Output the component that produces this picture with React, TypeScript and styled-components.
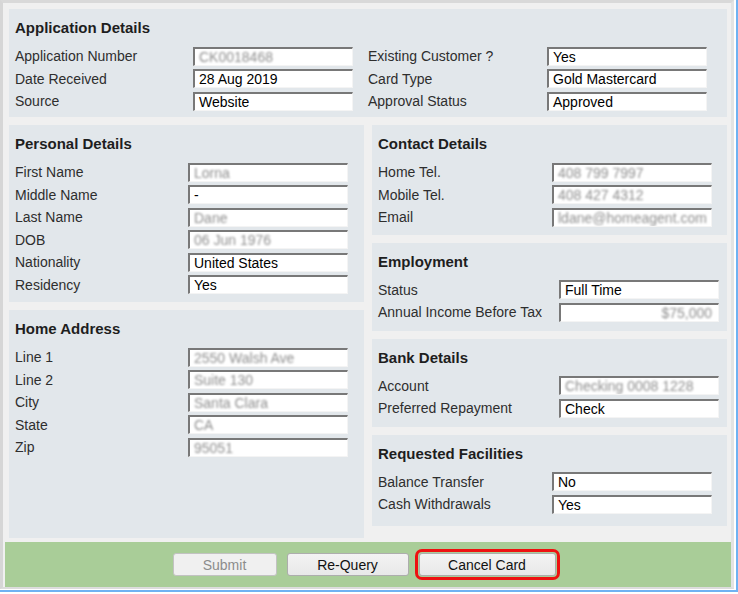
import React, { FC } from "react";
import styled, { createGlobalStyle } from "styled-components";

const GlobalStyle = createGlobalStyle`
  html, body {
    margin: 0;
    padding: 0;
    background: #ffffff;
    font-family: "Liberation Sans", Arial, sans-serif;
  }
`;

const Screen = styled.div`
  width: 738px;
  height: 594px;
  overflow: hidden;
  background: #ffffff;
`;

const BlueEdge = styled.div`
  width: 738px;
  box-sizing: border-box;
  border-right: 2px solid #6fb2f2;
  border-bottom: 2px solid #6fb2f2;
`;

const Frame = styled.div`
  width: 734px;
  box-sizing: border-box;
  background: #f0f0f0;
  border-left: 3px solid #d6d6d6;
  border-top: 3px solid #d9d9d9;
  border-right: 3px solid #e3e3e3;
  border-bottom: 2px solid #dcdcdc;
  padding-left: 2px;
  margin-bottom: 1px;
`;

const Main = styled.div`
  padding: 6px 4px 4px 4px;
  display: flex;
  flex-direction: column;
  gap: 8px;
`;

const Columns = styled.div`
  display: grid;
  grid-template-columns: 355px 355px;
  column-gap: 8px;
  align-items: start;
`;

const Stack = styled.div`
  display: flex;
  flex-direction: column;
  gap: 8px;
`;

const Panel = styled.section<{ $minHeight?: number; $padBottom?: number }>`
  background: #e2e7eb;
  padding: 10px 6px ${(p) => p.$padBottom ?? 6}px 6px;
  box-sizing: border-box;
  min-height: ${(p) => (p.$minHeight ? `${p.$minHeight}px` : "auto")};
`;

const Heading = styled.h2`
  margin: 0 0 8px 0;
  font-size: 15px;
  line-height: 18px;
  font-weight: bold;
  color: #1e1e1e;
`;

const Halves = styled.div`
  display: grid;
  grid-template-columns: 353px 1fr;
`;

const Row = styled.div<{ $labelWidth: number }>`
  display: grid;
  grid-template-columns: ${(p) => p.$labelWidth}px 160px;
  height: 22.5px;
  align-items: center;
`;

const Label = styled.span`
  font-size: 14px;
  color: #2e2e2e;
  white-space: nowrap;
`;

const Field = styled.div<{ $muted?: boolean; $right?: boolean }>`
  width: 160px;
  height: 19px;
  box-sizing: border-box;
  background: #ffffff;
  border-top: 2px solid #787878;
  border-left: 2px solid #787878;
  border-right: 1px solid #f4f4f4;
  border-bottom: 1px solid #f4f4f4;
  padding: 0 6px 0 4px;
  display: flex;
  align-items: center;
  justify-content: ${(p) => (p.$right ? "flex-end" : "flex-start")};
  font-size: 14px;
  line-height: 16px;
  white-space: nowrap;
  overflow: hidden;
  color: #000000;

  span {
    color: ${(p) => (p.$muted ? "#8f8f8f" : "inherit")};
    filter: ${(p) => (p.$muted ? "blur(1.3px)" : "none")};
  }
`;

const Footer = styled.div`
  height: 45px;
  background: #a9cd98;
  display: flex;
  align-items: center;
  justify-content: center;
  gap: 10px;
  padding-right: 8px;
`;

const Button = styled.button<{ $w: number; $flag?: boolean }>`
  width: ${(p) => p.$w}px;
  height: 23px;
  box-sizing: border-box;
  font-family: "Liberation Sans", Arial, sans-serif;
  font-size: 14px;
  color: #111111;
  background: linear-gradient(#f3f3f3, #e8e8e8);
  border: 1px solid #adadad;
  border-radius: 3px;
  padding: 0;
  outline: ${(p) => (p.$flag ? "3px solid #ee1111" : "none")};
  outline-offset: 1px;

  &:disabled {
    color: #8c8c8c;
    background: #f0f0f0;
    border-color: #c2c2c2;
  }
`;

type Item = { label: string; value: string; muted?: boolean; right?: boolean };

const Fields: FC<{ items: Item[]; labelWidth: number }> = ({ items, labelWidth }) => (
  <div>
    {items.map((it) => (
      <Row key={it.label} $labelWidth={labelWidth}>
        <Label>{it.label}</Label>
        <Field $muted={it.muted} $right={it.right}>
          <span>{it.value}</span>
        </Field>
      </Row>
    ))}
  </div>
);

const appLeft: Item[] = [
  { label: "Application Number", value: "CK0018468", muted: true },
  { label: "Date Received", value: "28 Aug 2019" },
  { label: "Source", value: "Website" },
];
const appRight: Item[] = [
  { label: "Existing Customer ?", value: "Yes" },
  { label: "Card Type", value: "Gold Mastercard" },
  { label: "Approval Status", value: "Approved" },
];
const personal: Item[] = [
  { label: "First Name", value: "Lorna", muted: true },
  { label: "Middle Name", value: "-" },
  { label: "Last Name", value: "Dane", muted: true },
  { label: "DOB", value: "06 Jun 1976", muted: true },
  { label: "Nationality", value: "United States" },
  { label: "Residency", value: "Yes" },
];
const address: Item[] = [
  { label: "Line 1", value: "2550 Walsh Ave", muted: true },
  { label: "Line 2", value: "Suite 130", muted: true },
  { label: "City", value: "Santa Clara", muted: true },
  { label: "State", value: "CA", muted: true },
  { label: "Zip", value: "95051", muted: true },
];
const contact: Item[] = [
  { label: "Home Tel.", value: "408 799 7997", muted: true },
  { label: "Mobile Tel.", value: "408 427 4312", muted: true },
  { label: "Email", value: "ldane@homeagent.com", muted: true },
];
const employment: Item[] = [
  { label: "Status", value: "Full Time" },
  { label: "Annual Income Before Tax", value: "$75,000", muted: true, right: true },
];
const bank: Item[] = [
  { label: "Account", value: "Checking 0008 1228", muted: true },
  { label: "Preferred Repayment", value: "Check" },
];
const facilities: Item[] = [
  { label: "Balance Transfer", value: "No" },
  { label: "Cash Withdrawals", value: "Yes" },
];

const App: FC = () => {
  return (
    <Screen>
      <GlobalStyle />
      <BlueEdge>
        <Frame>
          <Main>
            <Panel $padBottom={4.5}>
              <Heading>Application Details</Heading>
              <Halves>
                <Fields items={appLeft} labelWidth={178} />
                <Fields items={appRight} labelWidth={179} />
              </Halves>
            </Panel>
            <Columns>
              <Stack>
                <Panel>
                  <Heading>Personal Details</Heading>
                  <Fields items={personal} labelWidth={173} />
                </Panel>
                <Panel $minHeight={228}>
                  <Heading>Home Address</Heading>
                  <Fields items={address} labelWidth={173} />
                </Panel>
              </Stack>
              <Stack>
                <Panel>
                  <Heading>Contact Details</Heading>
                  <Fields items={contact} labelWidth={174} />
                </Panel>
                <Panel $minHeight={88}>
                  <Heading>Employment</Heading>
                  <Fields items={employment} labelWidth={181} />
                </Panel>
                <Panel $minHeight={88}>
                  <Heading>Bank Details</Heading>
                  <Fields items={bank} labelWidth={181} />
                </Panel>
                <Panel $minHeight={91}>
                  <Heading>Requested Facilities</Heading>
                  <Fields items={facilities} labelWidth={174} />
                </Panel>
              </Stack>
            </Columns>
          </Main>
          <Footer>
            <Button $w={104} disabled>
              Submit
            </Button>
            <Button $w={122}>Re-Query</Button>
            <Button $w={137} $flag>
              Cancel Card
            </Button>
          </Footer>
        </Frame>
      </BlueEdge>
    </Screen>
  );
};

export default App;
